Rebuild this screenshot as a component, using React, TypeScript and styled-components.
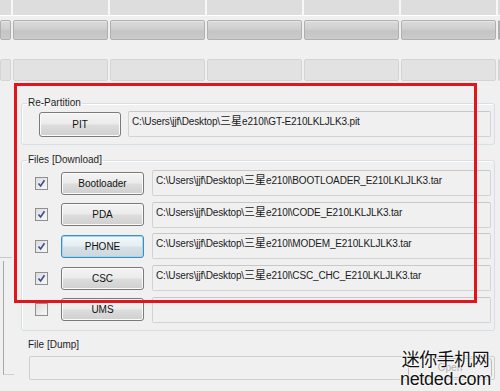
import React from "react";
import styled, { createGlobalStyle } from "styled-components";

const Global = createGlobalStyle`
  html, body { margin: 0; padding: 0; background: #f0f0f0; }
  body { font-family: "Liberation Sans", Arial, sans-serif; font-size: 10px; color: #000; }
`;

const Screen = styled.div`
  position: relative;
  width: 500px;
  height: 391px;
  overflow: hidden;
  background: #f0f0f0;
  display: flex;
  flex-direction: column;
`;

const TabRow = styled.div<{ $h: number; $bg: string }>`
  display: grid;
  grid-template-columns: 11px repeat(5, 95px) 1fr;
  column-gap: 2px;
  height: ${(p) => p.$h}px;
  background: ${(p) => p.$bg};
`;

const FlatCell = styled.div`
  background: #dddddd;
`;

const Bar = styled.div`
  height: 1px;
  background: #ffffff;
`;

const Gap = styled.div<{ $h: number }>`
  height: ${(p) => p.$h}px;
`;

const RaisedCell = styled.div`
  border: 1px solid #b0b0b0;
  border-radius: 2px;
  background: linear-gradient(#dadada 0%, #cfcfcf 45%, #c4c4c4 55%, #cbcbcb 100%);
  box-shadow: inset 0 1px 0 #e6e6e6;
`;

const LightCell = styled.div`
  border: 1px solid #d4d4d4;
  border-radius: 2px;
  background: #e2e2e2;
`;

const Middle = styled.div`
  display: flex;
  flex: 1;
`;

const SideStrip = styled.div`
  width: 14px;
  display: flex;
  flex-direction: column;
`;

const SideTop = styled.div`
  margin-top: 176px;
  border-top: 1px solid #c9c9c9;
  width: 12px;
`;

const SideBox = styled.div`
  margin-top: 3px;
  margin-left: 3px;
  height: 113px;
  border-left: 1px solid #a8a8a8;
  border-bottom: 1px solid #d0d0d0;
`;

const Content = styled.div`
  flex: 1;
  display: flex;
  flex-direction: column;
  padding: 16px 5px 0 7px;
`;

const Group = styled.fieldset<{ $pt: number; $pb: number; $pl: number; $mt?: number }>`
  margin: ${(p) => p.$mt ?? 0}px 0 0 0;
  padding: ${(p) => `${p.$pt}px 3px ${p.$pb}px ${p.$pl}px`};
  border: 1px solid #d5dfe5;
  border-radius: 3px;
  box-shadow: inset 1px 1px 0 #ffffff;
  min-width: 0;
`;

const Legend = styled.legend<{ $pl: number }>`
  padding: 0 1px;
  margin-left: ${(p) => 5 - p.$pl}px;
  font-size: 10px;
  line-height: 12px;
  color: #1e1e1e;
`;

const Row = styled.div`
  display: flex;
  align-items: center;
  height: 26px;
`;

const Rows = styled.div`
  display: flex;
  flex-direction: column;
  gap: 5.7px;
`;

const Check = styled.span`
  width: 11px;
  height: 11px;
  border: 1px solid #8f8f8f;
  background: linear-gradient(135deg, #dcdcdc, #f8f8f8);
  display: flex;
  align-items: center;
  justify-content: center;
  margin-right: 13px;
  flex: none;
`;

const Btn = styled.div<{ $w: number; $h?: number; $focus?: boolean }>`
  width: ${(p) => p.$w}px;
  height: ${(p) => p.$h ?? 23}px;
  flex: none;
  box-sizing: border-box;
  border: 1px solid ${(p) => (p.$focus ? "#3c8dc0" : "#7a7a7a")};
  border-radius: 3px;
  background: ${(p) =>
    p.$focus
      ? "linear-gradient(#f2f7fa 0%, #e6eef2 48%, #d6e0e6 52%, #cdd8de 100%)"
      : "linear-gradient(#f4f4f4 0%, #ebebeb 48%, #dddddd 52%, #cfcfcf 100%)"};
  box-shadow: inset 0 0 0 1px ${(p) => (p.$focus ? "#a6d7f2" : "#fbfbfb")};
  display: flex;
  align-items: center;
  justify-content: center;
  font-size: 10px;
  color: #111;
`;

const PathBox = styled.div<{ $ml: number }>`
  margin-left: ${(p) => p.$ml}px;
  flex: 1;
  height: 26px;
  box-sizing: border-box;
  border: 1px solid #d3d3d3;
  border-top-color: #c8c8c8;
  border-radius: 2px;
  background: #f0f0f0;
  padding: 2px 3px;
  font-size: 10px;
  line-height: 12px;
  letter-spacing: -0.15px;
  color: #1a1a1a;
  white-space: nowrap;
  overflow: hidden;
`;

const Cjk = styled.span`
  font-family: "Noto Sans CJK SC", sans-serif;
  font-size: 11px;
  letter-spacing: 0;
`;

const DumpLabel = styled.div`
  margin: 8px 0 0 7px;
  line-height: 12px;
  font-size: 10px;
  color: #1e1e1e;
`;

const DumpRow = styled.div`
  margin: 5px 0 0 8px;
  height: 24px;
  box-sizing: border-box;
  border: 1px solid #cfcfcf;
  border-radius: 2px;
  display: flex;
  justify-content: flex-end;
  align-items: center;
  padding-right: 2px;
`;

const OpenBtn = styled.div`
  width: 84px;
  height: 20px;
  box-sizing: border-box;
  border: 1px solid #bcbcbc;
  border-radius: 3px;
  display: flex;
  align-items: center;
  justify-content: center;
  color: #b0b0b0;
  font-size: 10px;
`;

const RedFrame = styled.div`
  position: absolute;
  left: 14px;
  top: 83px;
  width: 463px;
  height: 220px;
  box-sizing: border-box;
  border: 3px solid #e3151c;
  pointer-events: none;
`;

const Watermark = styled.div`
  position: absolute;
  right: 9px;
  bottom: 2px;
  display: flex;
  flex-direction: column;
  align-items: center;
  color: #111;
  text-shadow: 0 0 2px #fff, 0 0 2px #fff, 0 0 2px #fff;
`;

const WmCn = styled.div`
  font-family: "Noto Sans CJK SC", sans-serif;
  font-size: 18px;
  line-height: 21px;
  letter-spacing: -0.5px;
`;

const WmEn = styled.div`
  font-family: "Liberation Sans", Arial, sans-serif;
  font-size: 18px;
  line-height: 20px;
  letter-spacing: -0.3px;
`;

const Tick = () => (
  <svg width="9" height="9" viewBox="0 0 9 9">
    <path d="M1.5 4.5 L3.6 7 L7.5 1.2" fill="none" stroke="#3b4e86" strokeWidth="1.6" />
  </svg>
);

const files = [
  { name: "Bootloader", file: "BOOTLOADER_E210LKLJLK3.tar", on: true },
  { name: "PDA", file: "CODE_E210LKLJLK3.tar", on: true },
  { name: "PHONE", file: "MODEM_E210LKLJLK3.tar", on: true, focus: true },
  { name: "CSC", file: "CSC_CHC_E210LKLJLK3.tar", on: true },
  { name: "UMS", file: "", on: false },
];

const Path = ({ file }: { file: string }) => (
  <>
    C:\Users\jjf\Desktop\<Cjk>三星</Cjk>e210l\{file}
  </>
);

const cols = [0, 1, 2, 3, 4, 5, 6];

export default function App() {
  return (
    <Screen>
      <Global />
      <TabRow $h={15} $bg="#f7f7f7">
        {cols.map((c) => (
          <FlatCell key={c} />
        ))}
      </TabRow>
      <Bar />
      <Gap $h={4} />
      <TabRow $h={20} $bg="transparent">
        {cols.map((c) => (
          <RaisedCell key={c} />
        ))}
      </TabRow>
      <Gap $h={19} />
      <TabRow $h={22} $bg="transparent">
        {cols.map((c) => (
          <LightCell key={c} />
        ))}
      </TabRow>
      <Middle>
        <SideStrip>
          <SideTop />
          <SideBox />
        </SideStrip>
        <Content>
          <Group $pt={2} $pb={7} $pl={17}>
            <Legend $pl={17}>Re-Partition</Legend>
            <Row>
              <Btn $w={82} $h={25}>PIT</Btn>
              <PathBox $ml={7}>
                <Path file="GT-E210LKLJLK3.pit" />
              </PathBox>
            </Row>
          </Group>
          <Group $pt={4} $pb={7} $pl={13} $mt={9}>
            <Legend $pl={13}>Files [Download]</Legend>
            <Rows>
              {files.map((f) => (
                <Row key={f.name}>
                  <Check>{f.on && <Tick />}</Check>
                  <Btn $w={83} $focus={f.focus}>
                    {f.name}
                  </Btn>
                  <PathBox $ml={8}>{f.file && <Path file={f.file} />}</PathBox>
                </Row>
              ))}
            </Rows>
          </Group>
          <DumpLabel>File [Dump]</DumpLabel>
          <DumpRow>
            <OpenBtn>Open</OpenBtn>
          </DumpRow>
        </Content>
      </Middle>
      <RedFrame />
      <Watermark>
        <WmCn>迷你手机网</WmCn>
        <WmEn>netded.com</WmEn>
      </Watermark>
    </Screen>
  );
}
